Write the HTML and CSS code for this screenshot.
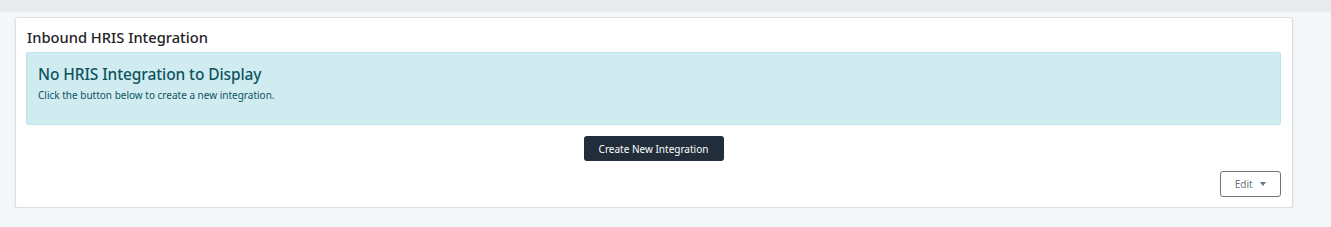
FILE: index.html
```html
<!DOCTYPE html>
<html lang="en">
<head>
    <meta charset="UTF-8">
    <meta name="viewport" content="width=device-width, initial-scale=1.0">
    <title>Inbound HRIS Integration</title>
    <link rel="stylesheet" href="styles.css">
</head>
<body>

<div class="topbar"></div>

<div class="page">
    <section class="card">
        <h2 class="card-title">Inbound HRIS Integration</h2>
        <div class="alert">
            <h4>No HRIS Integration to Display</h4>
            <p>Click the button below to create a new integration.</p>
        </div>
        <div class="actions">
            <button class="btn-dark">Create New Integration</button>
        </div>
        <div class="footer-actions">
            <button class="btn-outline">Edit <span class="caret"></span></button>
        </div>
    </section>
</div>

</body>
</html>
```

FILE: styles.css
```css
body, html {
    margin: 0;
    padding: 0;
    font-family: "Noto Sans", "Open Sans", sans-serif;
    background-color: #f4f7fa;
    color: #212529;
}
.topbar {
    height: 12px;
    background-color: #e9eaee;
}
.page {
    padding: 5px 38px 0 15px;
}
.card {
    background-color: #fff;
    border: 1px solid #dcdfe3;
    border-radius: 3px;
    box-shadow: 0 1px 2px rgba(0, 0, 0, 0.12);
    padding: 8px 11px 10px 10px;
}
.card-title {
    font-size: 14.7px;
    font-weight: 500;
    margin: 0 0 4px 1px;
    line-height: 22px;
    color: #1f2328;
}
.alert {
    background-color: #d1ecf1;
    border: 1px solid #bee5eb;
    border-radius: 2px;
    color: #0c5460;
    padding: 10px 11px 22px;
}
.alert h4 {
    margin: 0;
    font-size: 15.5px;
    font-weight: 500;
    line-height: 22px;
    letter-spacing: -0.1px;
}
.alert p {
    margin: 3px 0 0;
    font-size: 10px;
    line-height: 14px;
}
.actions {
    display: flex;
    justify-content: center;
    margin-top: 11px;
}
.btn-dark {
    background-color: #212d3b;
    color: #fff;
    border: none;
    border-radius: 3px;
    font-family: inherit;
    font-size: 10px;
    height: 25px;
    width: 140px;
    cursor: pointer;
}
.footer-actions {
    display: flex;
    justify-content: flex-end;
    margin-top: 10px;
}
.btn-outline {
    background-color: #fff;
    color: #6c757d;
    border: 1px solid #6c757d;
    border-radius: 3px;
    font-family: inherit;
    font-size: 10px;
    height: 26px;
    width: 61px;
    cursor: pointer;
}
.caret {
    display: inline-block;
    margin-left: 5px;
    vertical-align: 2px;
    border-top: 4px solid #6c757d;
    border-left: 3.5px solid transparent;
    border-right: 3.5px solid transparent;
}
```
